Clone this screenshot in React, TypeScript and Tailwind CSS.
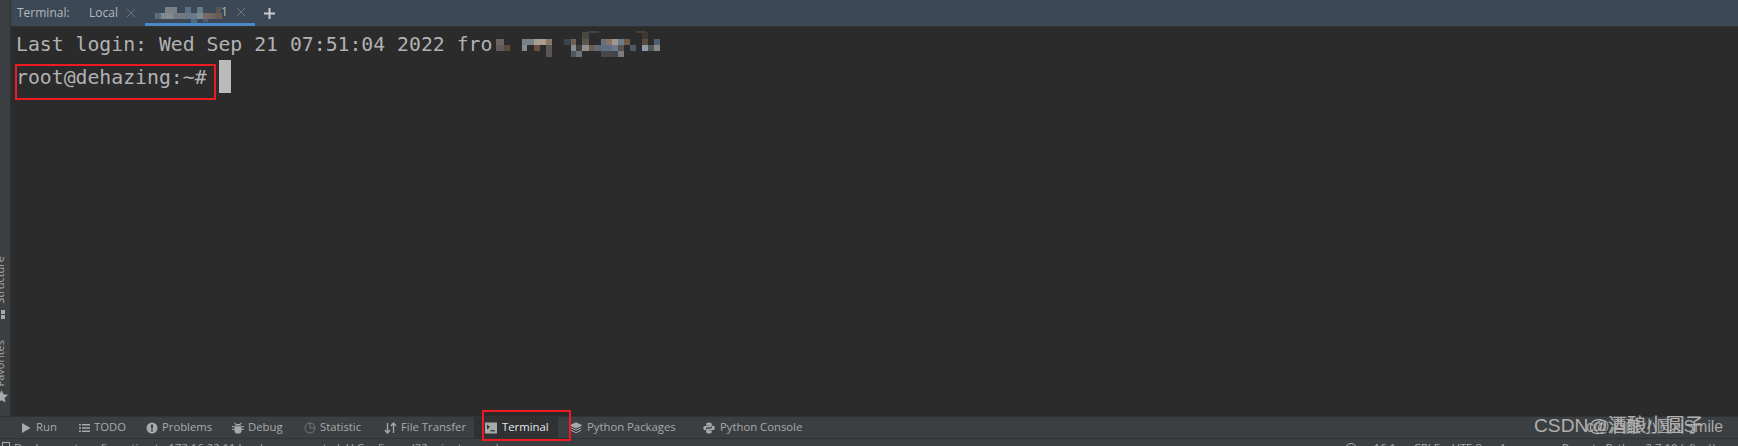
// App.tsx
const UI_FONT = 'font-["Open_Sans","Noto_Sans",sans-serif]';

type Cell = [number, number, number, number, string];

// blurred host name in the login line, x/y relative to the mosaic box
const HOST_CELLS: Cell[] = [
  [7, 12, 8, 6, '#6b6462'], [7, 18, 8, 6, '#5c5a5c'], [15, 18, 6, 6, '#5e4a3a'],
  [33, 12, 12, 6, '#7a8288'], [45, 12, 12, 6, '#a89e90'], [57, 12, 6, 6, '#8a7868'],
  [33, 18, 5, 6, '#8a8a8a'], [45, 18, 6, 6, '#6a5240'], [57, 18, 6, 12, '#5a5552'],
  [75, 12, 7, 6, '#3c4450'], [82, 12, 5, 6, '#6e6055'], [93, 5, 7, 7, '#4a4642'],
  [93, 12, 7, 6, '#5c5550'], [82, 18, 5, 6, '#8a8a8a'], [87, 18, 6, 6, '#3f3f3f'],
  [93, 18, 7, 6, '#909090'], [100, 18, 5, 6, '#6e5c4c'], [105, 18, 7, 6, '#5e6a76'],
  [112, 12, 5, 6, '#66727e'], [117, 12, 6, 6, '#8a7360'], [123, 12, 6, 6, '#a09890'],
  [129, 12, 6, 6, '#6e7c8a'], [135, 12, 6, 6, '#705a48'], [112, 18, 11, 6, '#5e6e80'],
  [123, 18, 6, 6, '#6a7a8a'], [129, 18, 6, 6, '#585450'], [141, 18, 6, 6, '#4e5a64'],
  [153, 18, 6, 6, '#8a9aa8'], [159, 18, 6, 6, '#555555'], [165, 18, 6, 6, '#888888'],
  [153, 12, 6, 6, '#5a4a3c'], [165, 12, 6, 6, '#50606e'], [153, 5, 6, 7, '#3e3832'],
  [82, 24, 5, 6, '#4e5860'], [87, 24, 6, 6, '#6a7278'], [112, 24, 6, 6, '#45484c'],
  [118, 24, 5, 6, '#4a4540'], [123, 24, 6, 6, '#3e4650'], [129, 24, 6, 6, '#7c7c7c'],
  [99, 4, 11, 2, '#3c4650'], [147, 4, 10, 2, '#4a3e36'],
];

// blurred session name in the tab title
const TAB_CELLS: Cell[] = [
  [10, 7, 12, 6, '#7a8088'], [30, 7, 6, 6, '#5a7088'], [42, 7, 6, 6, '#6a7c84'], [61, 7, 5, 6, '#5a5550'],
  [0, 13, 6, 6, '#5a6e78'], [6, 13, 6, 6, '#7d8a92'], [12, 13, 6, 6, '#8a8a8a'], [18, 13, 6, 6, '#6a7a86'],
  [24, 13, 6, 6, '#777777'], [30, 13, 6, 6, '#64788a'], [36, 13, 6, 6, '#6a7a88'], [42, 13, 6, 6, '#7a8a90'],
  [48, 13, 6, 6, '#776a6a'], [54, 13, 6, 6, '#6e6660'], [60, 13, 7, 6, '#6a5c52'],
  [36, 19, 6, 4, '#4e6a84'], [48, 19, 5, 3, '#4e6074'],
];

function Mosaic({ cells, width, height }: { cells: Cell[]; width: number; height: number }) {
  return (
    <svg width={width} height={height} viewBox={`0 0 ${width} ${height}`} className="shrink-0">
      {cells.map(([x, y, w, h, fill], i) => (
        <rect key={i} x={x} y={y} width={w} height={h} fill={fill} />
      ))}
    </svg>
  );
}

function CloseX() {
  return (
    <svg width="10" height="10" viewBox="0 0 10 10" className="shrink-0" stroke="#6a747f" strokeWidth="1" fill="none">
      <path d="M1 1l8 8M9 1l-8 8" />
    </svg>
  );
}

function RunIcon() {
  return (
    <svg width="12" height="12" viewBox="0 0 12 12" fill="#a7a9ab">
      <path d="M2 1l8.500 5L2 11z" />
    </svg>
  );
}

function TodoIcon() {
  return (
    <svg width="12" height="12" viewBox="0 0 12 12" fill="#a7a9ab">
      <path d="M1 2h2v1.500H1zM4 2h8v1.500H4zM1 5.200h2v1.500H1zM4 5.200h8v1.500H4zM1 8.400h2v1.500H1zM4 8.400h8v1.500H4z" />
    </svg>
  );
}

function ProblemsIcon() {
  return (
    <svg width="12" height="12" viewBox="0 0 12 12">
      <circle cx="6" cy="6" r="5.500" fill="#a7a9ab" />
      <path d="M5 2.500h2v4.200H5zM5 7.800h2v1.800H5z" fill="#3c3f41" />
    </svg>
  );
}

function DebugIcon() {
  return (
    <svg width="12" height="12" viewBox="0 0 12 12" fill="#a7a9ab">
      <path d="M3.500 2.500L2 1l.7-.5L4.400 2h3.200L9.300.5 10 1 8.500 2.500l.6 1H2.900z" />
      <path d="M2.500 4.200h7V9c0 1.600-1.500 2.600-3.500 2.600S2.500 10.600 2.500 9z" />
      <path d="M0 4h2.500v1H0zM0 6.800h2.500v1H0zM9.500 4H12v1H9.500zM9.500 6.800H12v1H9.500z" />
    </svg>
  );
}

function StatisticIcon() {
  return (
    <svg width="12" height="12" viewBox="0 0 12 12" fill="none" stroke="#74777a" strokeWidth="1">
      <circle cx="6" cy="6" r="5" />
      <path d="M6 1v5h5" />
    </svg>
  );
}

function TransferIcon() {
  return (
    <svg width="13" height="12" viewBox="0 0 13 12" fill="none" stroke="#a7a9ab" strokeWidth="1.300">
      <path d="M3.500 1v9.500M1 8l2.500 3L6 8M9.500 11V1.500M7 4l2.500-3L12 4" />
    </svg>
  );
}

function TerminalIcon() {
  return (
    <svg width="12" height="12" viewBox="0 0 12 12">
      <rect x="0" y="0.500" width="12" height="11" fill="#a7a9ab" />
      <path d="M2 2.500l3 2.500-3 2.500z" fill="#323537" />
      <path d="M5.500 8.800h4.500" stroke="#323537" strokeWidth="1.200" />
    </svg>
  );
}

function PackagesIcon() {
  return (
    <svg width="12" height="12" viewBox="0 0 12 12" fill="none" stroke="#a7a9ab" strokeWidth="1">
      <path d="M6 .8l5.500 2.600L6 6 .5 3.400z" fill="#a7a9ab" />
      <path d="M.8 5.700L6 8.200l5.200-2.500M.8 8.200L6 10.800l5.200-2.600" />
    </svg>
  );
}

function PythonIcon() {
  return (
    <svg width="12" height="12" viewBox="0 0 12 12" fill="#a7a9ab">
      <path d="M6 .5c-2 0-2.800.7-2.800 1.800V3.500H6.200V4H2C.9 4 .3 4.900.3 6.100c0 1.300.6 2.200 1.600 2.200h1V7c0-1 .8-1.700 1.800-1.700h2.500c.9 0 1.600-.7 1.600-1.500V2.300C8.800 1.200 7.800.5 6 .5z" />
      <path d="M6 11.500c2 0 2.800-.7 2.800-1.800V8.500H5.800V8H10c1.100 0 1.700-.9 1.700-2.100 0-1.300-.6-2.200-1.600-2.200h-1V5c0 1-.8 1.700-1.800 1.700H4.800c-.9 0-1.600.7-1.600 1.500v1.500c0 1.100 1 1.800 2.800 1.800z" />
    </svg>
  );
}

const TOOLS = [
  { label: 'Run', icon: <RunIcon />, width: 'w-[58px]' },
  { label: 'TODO', icon: <TodoIcon />, width: 'w-[68px]' },
  { label: 'Problems', icon: <ProblemsIcon />, width: 'w-[86px]' },
  { label: 'Debug', icon: <DebugIcon />, width: 'w-[72px]' },
  { label: 'Statistic', icon: <StatisticIcon />, width: 'w-[80px]' },
  { label: 'File Transfer', icon: <TransferIcon />, width: 'w-[90px]' },
];

export default function App() {
  return (
    <div className={`relative flex h-[446px] w-[1738px] flex-col overflow-hidden bg-[#2b2b2b] ${UI_FONT}`}>
      <div className="flex min-h-0 flex-1">
        {/* left tool strip */}
        <div className="flex w-[11px] shrink-0 flex-col items-start justify-end overflow-hidden border-r border-[#323232] bg-[#3c3f41] pb-[13px]">
          <span className="-ml-[8px] rotate-180 text-[11px] leading-[16px] text-[#a7a9ab] [writing-mode:vertical-rl]">Structure</span>
          <div className="mt-[7px] mb-[21px] ml-[1px] flex flex-col gap-[1px]">
            <div className="h-[4px] w-[4px] bg-[#a7a9ab]" />
            <div className="h-[4px] w-[4px] bg-[#a7a9ab]" />
          </div>
          <span className="-ml-[8px] rotate-180 text-[11px] leading-[16px] text-[#a7a9ab] [writing-mode:vertical-rl]">Favorites</span>
          <svg width="13" height="13" viewBox="0 0 12 12" className="mt-[3px] -ml-[5px] shrink-0" fill="#a7a9ab">
            <path d="M6 0l1.800 3.900 4.200.5-3.100 2.900.8 4.200L6 9.400l-3.700 2.100.8-4.200L0 4.400l4.200-.5z" />
          </svg>
        </div>

        <div className="flex min-w-0 flex-1 flex-col">
          {/* terminal tabs */}
          <div className="flex h-[27px] shrink-0 items-stretch border-b border-[#323232] bg-[#3c4856] text-[12px] text-[#b4b8bc]">
            <span className="ml-[6px] flex w-[61px] items-center">Terminal:</span>
            <div className="flex w-[67px] items-center gap-[8px] pl-[11px]">
              <span>Local</span>
              <CloseX />
            </div>
            <div className="flex w-[110px] items-center border-b-[3px] border-[#4a88c7] pl-[10px]">
              <Mosaic cells={TAB_CELLS} width={67} height={23} />
              <span className="-ml-[1px]">1</span>
              <span className="ml-[8px]"><CloseX /></span>
            </div>
            <svg width="11" height="11" viewBox="0 0 11 11" className="mt-[8px] ml-[9px]" stroke="#c8ccd0" strokeWidth="2">
              <path d="M5.500 0v11M0 5.500h11" />
            </svg>
          </div>

          {/* terminal output */}
          <div className='flex-1 pt-[1px] pl-[5px] font-["DejaVu_Sans_Mono",monospace] text-[19.800px] leading-[33px] text-[#b0b2b4]'>
            <div className="flex">
              <span className="whitespace-pre">Last login: Wed Sep 21 07:51:04 2022 fro</span>
              <span className="-mt-[1px] -ml-[3px] h-[33px]">
                <Mosaic cells={HOST_CELLS} width={172} height={33} />
              </span>
            </div>
            <div className="flex">
              <span className="whitespace-pre">root@dehazing:~#</span>
              <span className="-mt-[1px] ml-[12px] h-[33px] w-[12px] bg-[#bbbbbb]" />
            </div>
          </div>
        </div>
      </div>

      {/* tool window bar */}
      <div className="flex h-[22px] shrink-0 items-stretch border-t border-[#323232] bg-[#3c3f41] pl-[20px] text-[11.300px] text-[#a7a9ab]">
        {TOOLS.map((tool) => (
          <div key={tool.label} className={`flex items-center gap-[4px] ${tool.width}`}>
            {tool.icon}
            <span className="whitespace-nowrap">{tool.label}</span>
          </div>
        ))}
        <div className="flex w-[84px] items-center gap-[5px] bg-[#2f3133] pl-[11px] text-[#e8e8e8]">
          <TerminalIcon />
          <span>Terminal</span>
        </div>
        <div className="ml-[12px] flex w-[133px] items-center gap-[5px]">
          <PackagesIcon />
          <span className="whitespace-nowrap">Python Packages</span>
        </div>
        <div className="flex items-center gap-[5px]">
          <PythonIcon />
          <span className="whitespace-nowrap">Python Console</span>
        </div>
      </div>

      {/* status bar, cut off by the screenshot */}
      <div className="flex h-[8px] shrink-0 items-start justify-between overflow-hidden border-t border-[#323232] bg-[#3c3f41] pl-[2px] text-[11.300px] leading-[16px] text-[#a7a9ab]">
        <div className="flex items-start gap-[4px]">
          <div className="mt-[3px] h-[10px] w-[8px] border border-[#a7a9ab]" />
          <span className="mt-[1px] whitespace-nowrap">Deployment configuration to 172.16.22.11 has been corrected: U Configure (32 minutes ago)</span>
        </div>
        <div className="mt-[1px] mr-[23px] flex items-start whitespace-nowrap">
          <div className="mt-[3px] mr-[17px] h-[12px] w-[12px] rounded-full border border-[#a7a9ab]" />
          <span className="w-[40px]">16:1</span>
          <span className="w-[38px]">CRLF</span>
          <span className="w-[47px]">UTF-8</span>
          <span className="w-[63px]">4 spaces</span>
          <span>Remote Python 3.7.10 (sftp://</span>
        </div>
      </div>

      {/* red annotation boxes */}
      <div className="absolute top-[64px] left-[15px] h-[36px] w-[201px] border-2 border-[#ed1c24]" />
      <div className="absolute top-[410px] left-[482px] h-[31px] w-[89px] border-2 border-[#ed1c24]" />

      {/* watermarks */}
      <span className='absolute top-[415px] left-[1586px] font-["Liberation_Sans","Noto_Sans_CJK_SC",sans-serif] text-[15.700px] whitespace-nowrap text-[#a9a9a9]'>c@酒酿小圆xiSmile</span>
      <span className='absolute top-[412px] left-[1534px] font-["Liberation_Sans","Noto_Sans_CJK_SC",sans-serif] text-[19.200px] whitespace-nowrap text-[#b0b0b0]'>CSDN@酒酿小圆子</span>
    </div>
  );
}
